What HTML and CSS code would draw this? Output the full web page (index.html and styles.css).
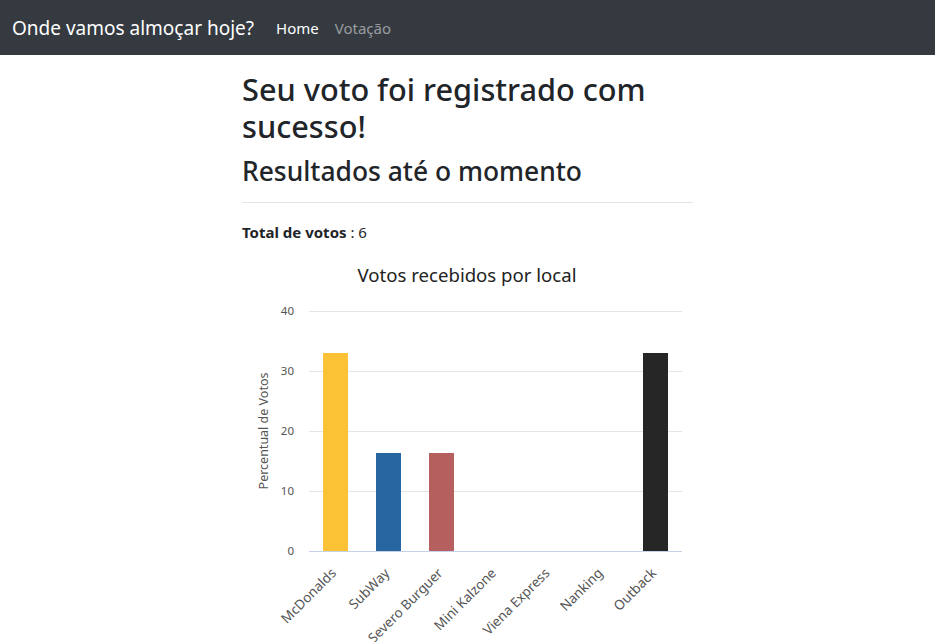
FILE: index.html
```html
<!DOCTYPE html>
<html lang="pt-BR">
<head>
<meta charset="utf-8">
<title>Onde vamos almoçar hoje?</title>
<link rel="stylesheet" href="styles.css">
</head>
<body>
<nav class="navbar">
  <a class="brand" href="#">Onde vamos almoçar hoje?</a>
  <a class="nav-link active" href="#">Home</a>
  <a class="nav-link" href="#">Votação</a>
</nav>
<main class="container">
  <h2 class="title">Seu voto foi registrado com sucesso!</h2>
  <h3 class="subtitle">Resultados até o momento</h3>
  <hr class="divider">
  <p class="total"><strong>Total de votos</strong> : 6</p>
  <svg class="chart" width="450" height="388" viewBox="0 0 450 388">
    <text class="chart-title" x="225" y="28" text-anchor="middle">Votos recebidos por local</text>
    <g class="grid">
      <line x1="67" x2="440" y1="57.5" y2="57.5"/>
      <line x1="67" x2="440" y1="117.5" y2="117.5"/>
      <line x1="67" x2="440" y1="177.5" y2="177.5"/>
      <line x1="67" x2="440" y1="237.5" y2="237.5"/>
    </g>
    <g class="ylabels">
      <text x="52" y="61">40</text>
      <text x="52" y="121">30</text>
      <text x="52" y="181">20</text>
      <text x="52" y="241">10</text>
      <text x="52" y="301">0</text>
    </g>
    <text class="axis-title" transform="translate(26 177) rotate(-90)" text-anchor="middle">Percentual de Votos</text>
    <rect class="bar-yellow" x="81" y="99" width="25" height="198"/>
    <rect class="bar-blue" x="134" y="199" width="25" height="98"/>
    <rect class="bar-red" x="187" y="199" width="25" height="98"/>
    <rect class="bar-black" x="401" y="99" width="25" height="198"/>
    <line class="baseline" x1="67" x2="440" y1="297.5" y2="297.5"/>
    <g class="xlabels" text-anchor="end">
      <text transform="translate(95 320) rotate(-45)">McDonalds</text>
      <text transform="translate(148.5 320) rotate(-45)">SubWay</text>
      <text transform="translate(201.5 320) rotate(-45)">Severo Burguer</text>
      <text transform="translate(255 320) rotate(-45)">Mini Kalzone</text>
      <text transform="translate(308.5 320) rotate(-45)">Viena Express</text>
      <text transform="translate(361.5 320) rotate(-45)">Nanking</text>
      <text transform="translate(415 320) rotate(-45)">Outback</text>
    </g>
  </svg>
</main>
</body>
</html>
```

FILE: styles.css
```css
* { box-sizing: border-box; }
body {
  margin: 0;
  font-family: "Noto Sans", "Open Sans", sans-serif;
  color: #212529;
  background: #fff;
}
.navbar {
  display: flex;
  align-items: center;
  height: 55px;
  padding: 0 12px;
  background: #343a40;
}
.brand {
  font-size: 19px;
  color: #fff;
  text-decoration: none;
  margin-right: 14px;
}
.nav-link {
  font-size: 15px;
  color: rgba(255,255,255,0.5);
  text-decoration: none;
  padding: 0 8px;
}
.nav-link.active { color: #fff; }
.container {
  width: 451px;
  margin: 0 auto;
  padding-top: 16px;
}
.title {
  margin: 0;
  font-size: 30.7px;
  font-weight: 500;
  line-height: 37px;
}
.subtitle {
  margin: 10px 0 0;
  font-size: 26.4px;
  font-weight: 500;
  line-height: 32px;
}
.divider {
  margin: 15px 0 0;
  border: 0;
  border-top: 1px solid #e5e5e5;
}
.total {
  margin: 18px 0 0;
  font-size: 15px;
  line-height: 22px;
}
.chart {
  display: block;
  margin-top: 11px;
  overflow: visible;
  font-family: "Noto Sans", "Open Sans", sans-serif;
}
.chart-title { font-size: 18.6px; fill: #222; }
.grid line { stroke: #e4e4e4; stroke-width: 1; }
.baseline { stroke: #c5d3ea; stroke-width: 1; }
.ylabels text { font-size: 11.5px; fill: #555; text-anchor: end; }
.axis-title { font-size: 12.5px; fill: #555; }
.xlabels text { font-size: 13.5px; fill: #555; }
.bar-yellow { fill: #fcc236; }
.bar-blue { fill: #2866a1; }
.bar-red { fill: #b55f5e; }
.bar-black { fill: #262626; }
```
